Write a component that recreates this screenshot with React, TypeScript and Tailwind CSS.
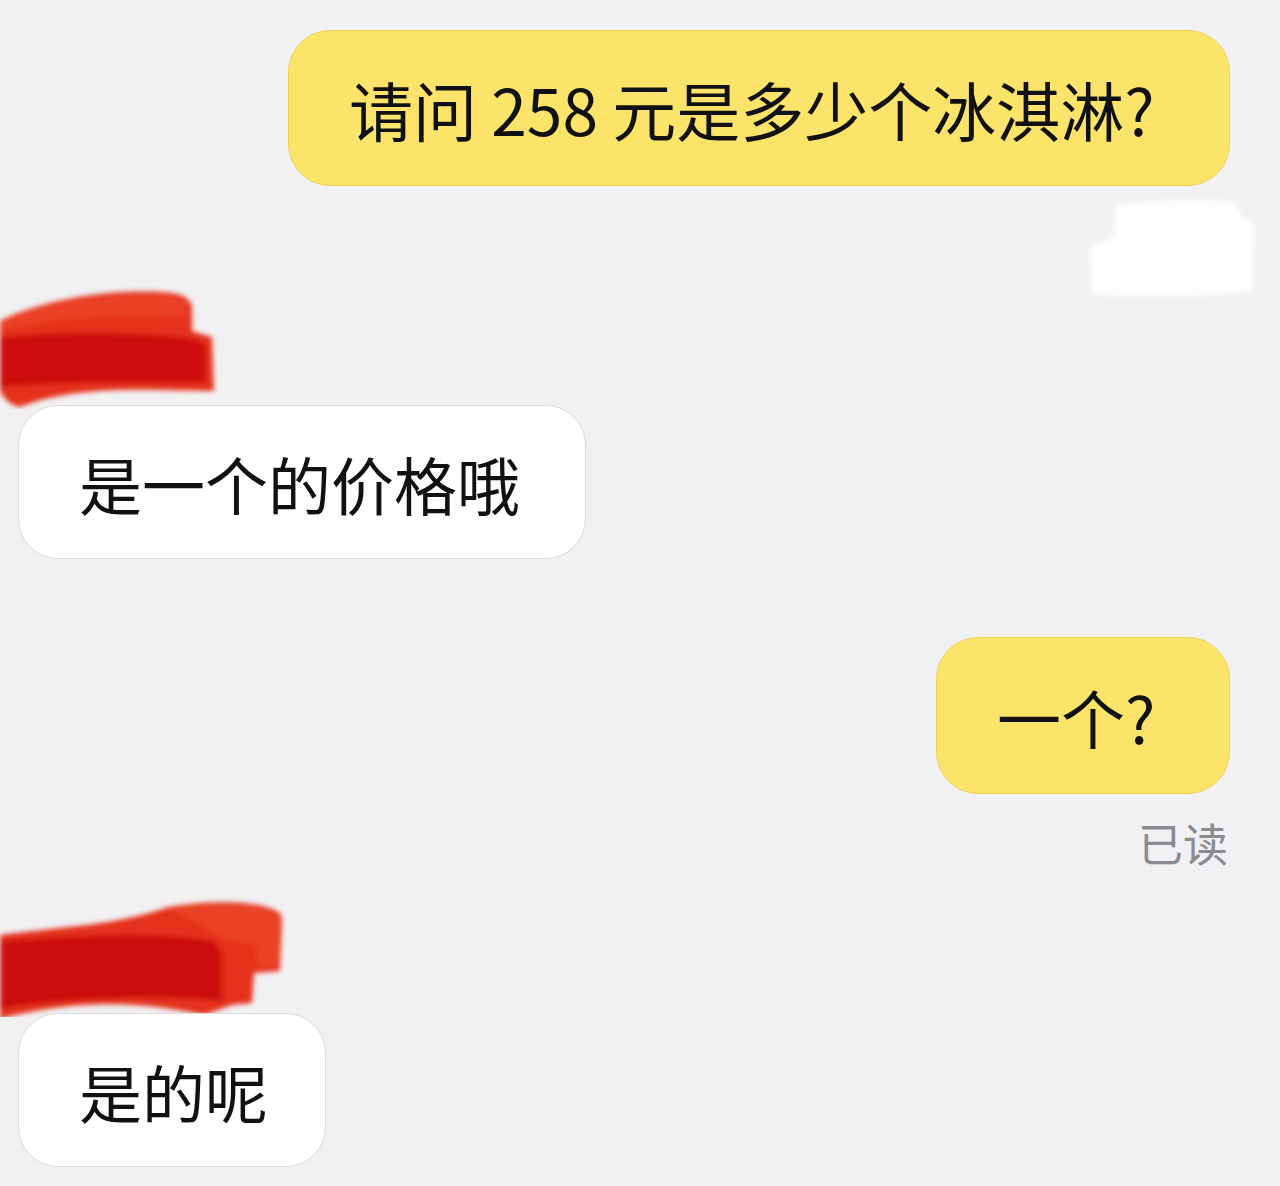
const cjk = 'font-["PingFang_SC","Noto_Sans_CJK_SC","Noto_Sans",sans-serif]'

function RedMark({ variant }: { variant: 1 | 2 }) {
  if (variant === 1) {
    return (
      <svg width="220" height="122" viewBox="0 0 220 122" className="block">
        <defs>
          <filter id="soft1" x="-5%" y="-5%" width="110%" height="110%">
            <feGaussianBlur stdDeviation="2.4" />
          </filter>
        </defs>
        <g filter="url(#soft1)">
          <path d="M0 34 C40 14 110 0 172 6 C186 8 192 14 192 22 L192 44 L212 50 L214 104 C160 104 80 96 20 120 C10 118 4 112 0 104 Z" fill="#e5321c" />
          <path d="M0 50 C60 44 140 44 196 52 L206 58 L206 96 C150 96 70 94 0 100 Z" fill="#c4020a" opacity="0.75" />
          <path d="M0 34 C40 16 110 2 170 8 L186 14 L186 30 C120 26 60 30 0 44 Z" fill="#ed4a2e" opacity="0.6" />
        </g>
      </svg>
    )
  }
  return (
    <svg width="286" height="120" viewBox="0 0 286 120" className="block">
      <defs>
        <filter id="soft2" x="-5%" y="-5%" width="110%" height="110%">
          <feGaussianBlur stdDeviation="2.4" />
        </filter>
      </defs>
      <g filter="url(#soft2)">
        <path d="M0 38 C60 30 120 28 168 10 C215 2 262 4 280 16 L282 22 L280 74 L254 76 L252 106 L232 108 L204 118 C150 106 80 100 0 122 Z" fill="#e5321c" />
        <path d="M0 44 C80 38 160 34 214 44 L222 56 L222 104 C160 98 70 100 0 112 Z" fill="#c2020a" opacity="0.75" />
        <path d="M168 12 C215 4 262 6 280 18 L280 70 L258 70 L256 48 L220 40 C200 26 185 18 168 12 Z" fill="#ec4a2c" opacity="0.7" />
      </g>
    </svg>
  )
}

function WhiteBlot() {
  return (
    <svg width="170" height="110" viewBox="0 0 170 110" className="block">
      <defs>
        <filter id="soft3" x="-10%" y="-10%" width="120%" height="120%">
          <feGaussianBlur stdDeviation="2.5" />
        </filter>
      </defs>
      <path
        d="M30 12 C70 6 130 4 150 10 L156 24 L168 28 L166 96 C120 104 50 102 6 100 L4 52 L28 44 Z"
        fill="#ffffff"
        filter="url(#soft3)"
      />
    </svg>
  )
}

export default function App() {
  return (
    <div className={`w-[1280px] h-[1186px] overflow-hidden bg-[#f1f1f3] text-[#111111] ${cjk}`}>
      <div className="flex justify-end pt-[30px] pr-[50px]">
        <div className="flex h-[156px] w-[942px] items-center rounded-[42px] border border-[#efd35a] bg-[#fce46a] pl-[60px] text-[64px] leading-none whitespace-pre">
          请问 258 元是多少个冰淇淋?
        </div>
      </div>

      <div className="flex h-[219px] justify-between">
        <div className="self-end -mb-[4px]">
          <RedMark variant={1} />
        </div>
        <div className="mt-[8px] mr-[24px] self-start">
          <WhiteBlot />
        </div>
      </div>

      <div className="flex pl-[18px]">
        <div className="flex h-[154px] w-[568px] items-center rounded-[40px] border border-[#dcdce0] bg-white pl-[60px] text-[63px] leading-none">
          是一个的价格哦
        </div>
      </div>

      <div className="flex justify-end pt-[78px] pr-[50px]">
        <div className="flex h-[157px] w-[294px] items-center rounded-[42px] border border-[#efd35a] bg-[#fce46a] pl-[60px] text-[64px] leading-none">
          一个?
        </div>
      </div>

      <div className="flex justify-end pt-[26px] pr-[52px]">
        <span className="text-[45px] leading-none text-[#8b8b90]">已读</span>
      </div>

      <div className="flex h-[148px] items-end">
        <div className="-mb-[4px]">
          <RedMark variant={2} />
        </div>
      </div>

      <div className="flex pl-[18px]">
        <div className="flex h-[154px] w-[308px] items-center rounded-[40px] border border-[#dcdce0] bg-white pl-[60px] text-[63px] leading-none">
          是的呢
        </div>
      </div>
    </div>
  )
}
